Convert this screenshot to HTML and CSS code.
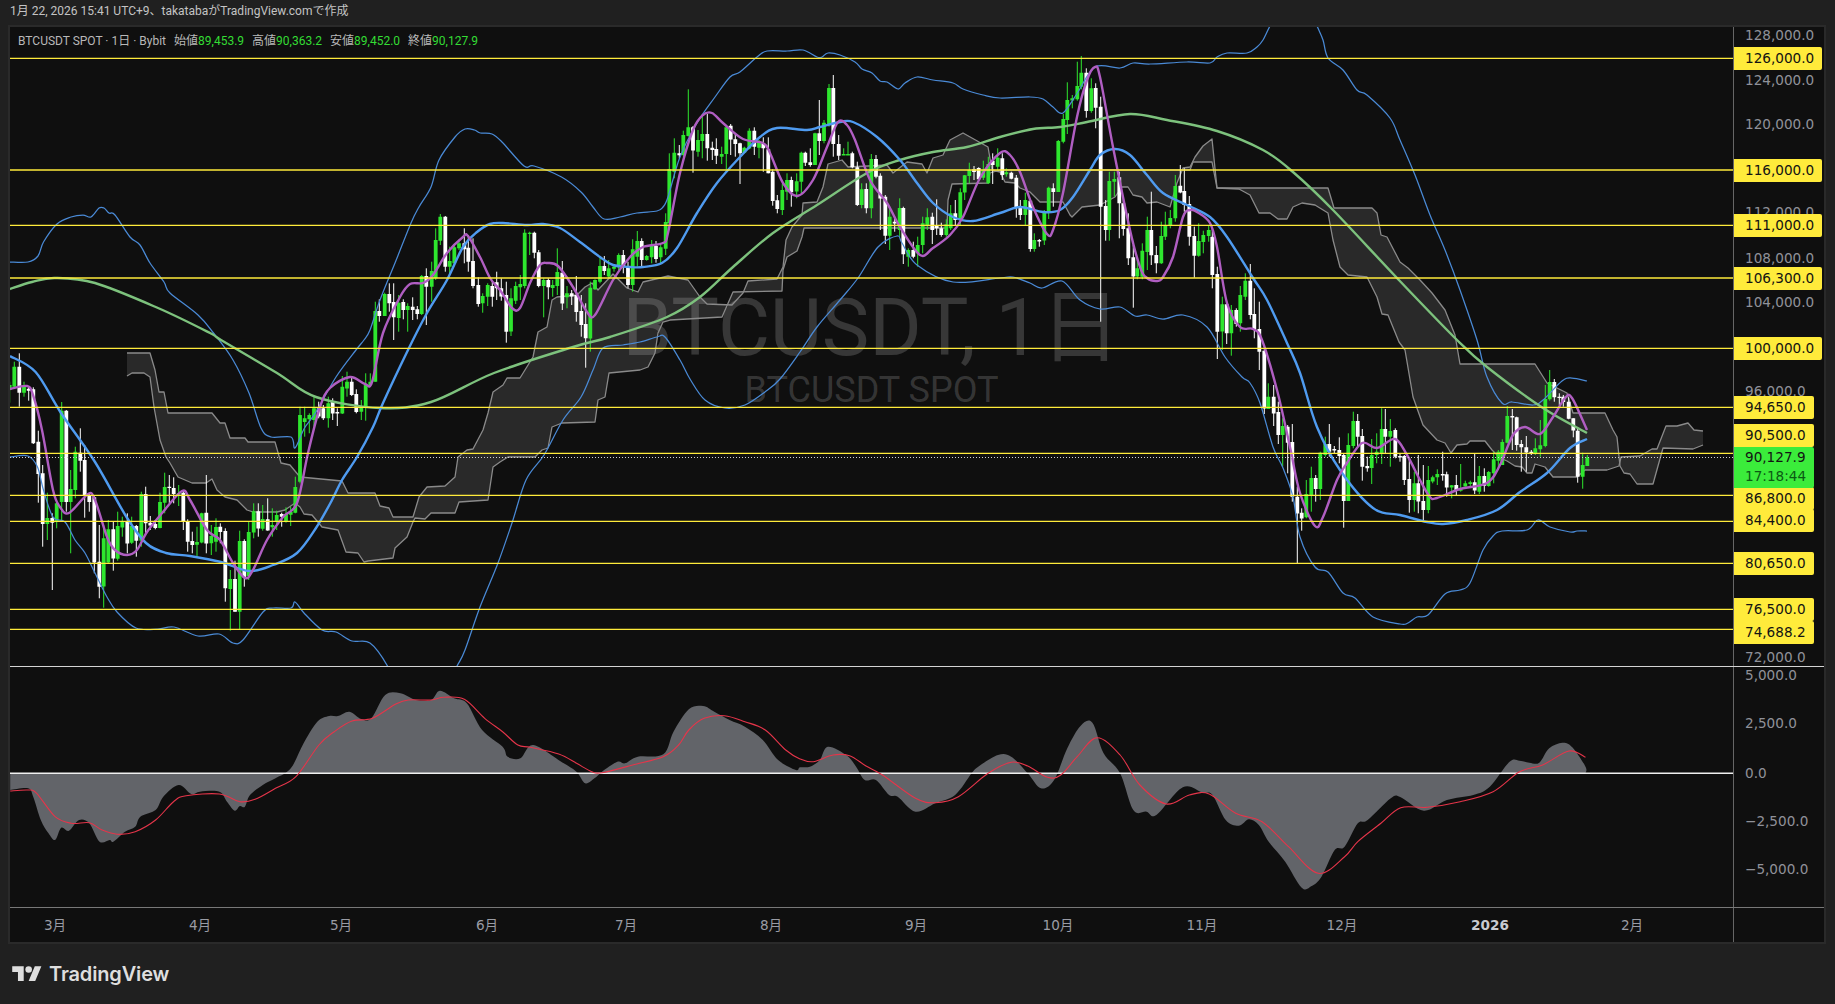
FILE: index.html
```html
<!DOCTYPE html>
<html lang="ja">
<head>
<meta charset="utf-8">
<title>BTCUSDT SPOT 1日 Bybit</title>
<link rel="stylesheet" href="styles.css">
</head>
<body>
<header class="stamp">1月 22, 2026 15:41 UTC+9、takatabaがTradingView.comで作成</header>
<main class="frame">
  <section class="row pane-main">
    <div class="plot">
      <div class="watermark">
        <div class="wm-title">BTCUSDT, 1日</div>
        <div class="wm-sub">BTCUSDT SPOT</div>
      </div>
      <svg id="main-chart" class="chart" viewBox="10 27 1723 639" preserveAspectRatio="none"></svg>
      <div class="legend">
        <span class="legend-title">BTCUSDT SPOT · 1日 · Bybit</span>
        <span class="ohlc">始値<b>89,453.9</b></span>
        <span class="ohlc">高値<b>90,363.2</b></span>
        <span class="ohlc">安値<b>89,452.0</b></span>
        <span class="ohlc">終値<b>90,127.9</b></span>
      </div>
    </div>
    <div class="axis" id="price-axis"></div>
  </section>
  <section class="row pane-macd">
    <div class="plot">
      <svg id="macd-chart" class="chart" viewBox="10 667 1723 240" preserveAspectRatio="none"></svg>
    </div>
    <div class="axis" id="macd-axis"></div>
  </section>
  <section class="row pane-time">
    <div class="plot" id="time-axis"></div>
    <div class="axis axis-corner"></div>
  </section>
</main>
<footer class="brand">
  <svg class="brand-mark" viewBox="0 0 36 28" aria-hidden="true">
    <path d="M14 22H7V11H0V4h14v18zM28 22h-8l7.5-18h8L28 22z"></path>
    <circle cx="20" cy="8" r="4"></circle>
  </svg>
  <span class="brand-name">TradingView</span>
</footer>
<script src="chart.js"></script>
</body>
</html>
```
FILE: styles.css
```css
* { box-sizing: border-box; }
html, body { margin: 0; height: 100%; }
body {
  width: 1835px;
  height: 1004px;
  overflow: hidden;
  background: #202020;
  color: #b8b8b8;
  font-family: Roboto, "Noto Sans CJK JP", sans-serif;
}
.stamp {
  height: 25px;
  padding: 3px 0 0 10px;
  font-size: 12px;
  line-height: 17px;
  color: #c4c4c4;
}
.frame {
  width: 1818px;
  margin-left: 8px;
  border: 2px solid #2a2a2a;
  background: #0f0f0f;
  display: flex;
  flex-direction: column;
}
.row { display: flex; }
.pane-main { height: 640px; border-bottom: 1px solid #d4d4d4; }
.pane-macd { height: 241px; border-bottom: 1px solid #787878; }
.pane-time { height: 34px; }
.plot {
  position: relative;
  width: 1723px;
  overflow: hidden;
}
.chart {
  position: absolute;
  inset: 0;
  width: 100%;
  height: 100%;
  display: block;
}
.axis {
  position: relative;
  width: 91px;
  border-left: 1px solid #666;
  overflow: hidden;
  font-family: "DejaVu Sans", "Noto Sans CJK JP", sans-serif;
  font-size: 13.6px;
}
.tick, .tag {
  position: absolute;
  left: 0;
  height: 23px;
  line-height: 23px;
  padding: 0 8px 0 11px;
  white-space: nowrap;
}
.tick { color: #8f9199; }
.tag {
  background: #ffeb3b;
  color: #131313;
  border-radius: 0 2px 2px 0;
}
.tag-live {
  height: 41px;
  line-height: 19px;
  padding-top: 1px;
  background: #3bec3b;
}
.tag-live span { display: block; color: #0b5a14; }
.legend {
  position: absolute;
  left: 8px;
  top: 6px;
  display: flex;
  gap: 8px;
  font-size: 12px;
  line-height: 17px;
  color: #b8b8b8;
  white-space: nowrap;
}
.ohlc b { font-weight: 400; color: #34dc34; }
.watermark {
  position: absolute;
  inset: 6px 0 0 0;
  display: flex;
  flex-direction: column;
  align-items: center;
  justify-content: center;
  gap: 3px;
  color: rgba(255, 255, 255, 0.17);
  white-space: nowrap;
}
.wm-title { font-size: 80px; line-height: 78px; }
.wm-sub { font-size: 36px; line-height: 40px; }
.time-label {
  position: absolute;
  top: 7px;
  transform: translateX(-50%);
  font-family: "DejaVu Sans", "Noto Sans CJK JP", sans-serif;
  font-size: 13.6px;
  line-height: 18px;
  color: #9a9ca4;
}
.time-label.year { font-weight: 700; color: #c8cad0; }
.brand {
  display: flex;
  align-items: center;
  gap: 7px;
  height: 60px;
  padding-left: 12px;
  color: #dedede;
}
.brand-mark { width: 30px; height: 23px; fill: currentColor; }
.brand-name { font-family: Inter, "Open Sans", sans-serif; font-size: 20px; font-weight: 600; letter-spacing: -0.15px; }
```
FILE: chart.js
```js
// Every row is "colour x high bodyTop bodyBottom low", measured in a crop that begins at (x0, y0) at 3x.
const candleBlocks = [
  [0, 340, `g 29 125 135 150 188;g 43 65 80 140 145;w 58 40 80 158 200;g 72 125 140 158 170;w 86 140 146 152 182;w 100 142 148 310 312;w 115 272 305 402 488;w 128 375 400 552 620;g 142 458 534 552 600;w 157 520 534 548 750;g 170 488 490 544 565;g 185 186 212 486 540;w 199 210 212 486 515;g 212 390 447 486 640;g 226 320 335 450 475;w 241 265 338 362 395;w 254 315 360 465 533;w 268 460 465 486 515;w 283 468 472 668 700;w 298 555 665 740 775;g 311 555 595 740 803;g 325 540 568 668 670;w 340 545 568 656 692;g 353 515 558 656 662;g 367 530 545 562 590;w 382 520 545 610 640;g 395 530 558 608 612;w 409 555 558 602 650;g 424 455 462 602 620;w 437 440 462 550 580;w 451 528 548 556 570;w 466 540 552 564 568;g 480 458 486 564 565;g 494 398 441 488 520;w 508 405 440 444 490;w 521 412 444 462 490;g 536 435 460 464 498;w 550 450 458 545 570;w 563 538 545 605 635;w 577 575 603 615 640;g 591 560 606 614 648;g 605 518 520 608 610;w 619 405 518 610 640;g 634 555 588 610 645;g 648 535 561 605 635;w 661 550 560 576 610;w 676 565 573 745 785;g 691 690 717 747 872;w 705 662 717 815 815;g 719 572 603 815 868;w 733 598 603 712 740;g 746 545 576 708 720;g 761 490 514 578 595;w 775 490 514 566 590;g 788 495 537 566 572;w 803 475 538 572 572;g 817 505 555 562 590;g 830 512 525 545 570;w 845 518 522 530 560;g 858 502 522 545 548;g 872 500 516 524 558;g 886 410 441 518 520;g 900 200 225 425 430`],
  [300, 200, `g 14 620 655 666 710;g 28 640 645 658 700;g 42 590 625 660 680;w 56 605 625 650 655;w 70 615 625 655 660;g 85 590 610 655 683;w 98 595 605 640 660;w 112 625 636 638 678;g 127 528 560 640 642;g 141 515 545 565 590;w 155 530 545 585 588;w 169 568 582 636 640;g 184 600 620 635 660;g 197 520 555 620 662;g 211 520 545 555 560;g 226 305 333 545 545;w 238 298 333 348 365;g 254 278 282 348 348;w 268 250 282 310 335;w 281 250 306 352 420;g 296 285 308 354 395;w 310 298 306 330 358;g 323 310 318 330 395;w 338 292 320 330 360;w 352 318 328 342 358;g 365 225 228 342 345;w 379 205 228 260 375;g 395 185 213 260 305;g 407 85 120 235 240;g 421 42 50 122 135;w 436 48 50 200 215;g 449 140 183 200 225;g 463 135 142 190 195;g 477 118 130 145 150;w 493 85 130 148 190;w 505 105 143 185 215;w 519 115 183 258 265;w 535 232 255 312 320;g 548 280 288 310 338;g 563 250 255 290 318;w 577 240 258 290 320;w 590 215 247 265 300;w 604 235 265 290 302;w 619 245 285 395 428;g 633 265 295 395 408;g 647 245 258 302 312;g 661 225 252 262 300;g 674 88 98 258 265;g 689 95 98 100 165;w 703 95 98 158 175;w 716 150 157 258 262;g 731 235 240 258 352;w 745 235 240 262 298;g 758 240 255 264 290;g 772 145 216 258 285;w 787 183 218 310 330;g 801 258 280 292 325;w 815 270 280 290 315;w 829 228 285 336 365;w 844 285 333 375 410;w 857 310 372 415 503;g 871 245 263 415 455;g 885 238 240 268 270;g 900 170 198 245 250;w 913 168 198 213 225;g 926 180 205 230 235`],
  [600, 40, `g 42 672 680 686 695;g 56 640 645 682 690;w 70 630 645 680 700;w 84 665 682 735 745;g 98 598 628 735 755;g 112 573 603 650 680;w 125 595 603 660 680;g 140 645 648 660 662;g 155 600 618 652 670;w 168 603 618 657 668;g 182 615 622 652 672;g 197 520 546 626 645;g 208 340 387 550 550;g 223 295 338 395 415;w 238 315 340 346 355;g 250 272 285 345 350;g 265 148 262 288 290;w 279 258 262 332 398;g 294 270 300 335 350;g 307 222 282 303 355;w 322 222 282 325 362;w 337 305 323 330 360;w 349 295 327 347 372;g 365 320 342 350 372;g 379 255 262 342 388;w 392 252 257 298 345;w 406 280 298 312 350;w 420 308 310 340 432;g 433 320 323 338 340;g 448 265 272 325 328;w 463 262 272 320 345;g 477 300 305 323 355;w 490 292 310 325 395;w 505 292 328 400 400;w 518 388 395 483 497;w 532 465 481 507 520;g 547 432 450 510 525;g 561 400 420 455 480;w 574 410 420 457 500;g 590 400 424 455 475;g 604 335 338 425 460;w 616 335 338 368 378;w 631 325 367 375 380;g 645 278 280 375 375;w 658 180 280 303 345;g 672 240 248 303 310;g 687 132 144 255 260;w 700 105 144 312 350;w 716 285 312 347 360;g 731 325 342 345 345;g 744 305 342 345 345;w 757 335 340 382 385;w 772 365 382 495 498;g 785 430 448 495 505;w 799 430 447 505 520;g 814 342 357 505 535;w 828 345 357 410 415;w 841 400 407 475 570;w 856 465 470 587 612;g 869 500 530 587 630;w 884 530 545 550 575;g 899 475 504 570 590;w 910 500 504 643 672;g 925 625 630 650 680;w 940 605 630 650 655;g 953 590 615 640 680;g 968 530 550 615 640;g 982 505 532 555 570;w 997 518 530 570 612;w 1010 478 556 565 585;w 1024 548 565 585 590;g 1039 538 553 585 590;g 1052 495 520 565 570;w 1066 480 520 540 555;g 1081 445 457 537 555;g 1094 405 406 458 480;g 1108 368 390 408 430;w 1122 378 388 396 420;w 1136 382 384 418 420;g 1150 362 390 413 420;g 1165 350 372 430 432;w 1178 340 362 375 432;g 1193 325 353 380 390`],
  [1000, 40, `w 7 340 355 405 420;g 19 385 397 403 410;w 34 395 398 416 418;w 49 405 413 503 533;w 61 480 500 525 540;g 76 458 480 525 555;w 91 480 482 627 635;g 103 580 600 627 635;w 118 597 600 602 620;g 133 510 514 602 615;g 146 440 443 517 537;w 160 430 445 456 500;g 175 300 303 456 456;g 190 222 237 305 310;g 202 127 180 240 282;g 217 165 175 182 205;g 232 65 138 178 182;g 244 48 98 140 148;w 259 85 98 213 233;g 274 115 145 213 218;w 287 130 144 203 265;w 302 170 200 500 845;w 317 480 498 570 602;g 328 395 423 570 602;g 343 395 417 425 470;w 358 395 412 490 595;w 370 470 490 567 587;w 385 520 565 655 675;w 400 615 652 710 803;g 412 655 685 710 718;g 427 610 632 710 718;g 442 530 570 636 690;w 454 455 570 646 675;w 469 618 645 670 700;g 484 545 588 670 672;g 496 515 558 590 600;g 511 510 534 556 565;g 526 405 438 535 545;w 541 375 437 457 460;w 553 385 453 495 515;w 568 468 492 590 617;w 583 560 588 647 713;g 596 550 603 647 650;g 610 572 585 606 640;g 626 555 570 588 605;w 637 565 590 705 745;w 652 680 702 875 957;g 667 770 793 875 930;w 680 785 793 880 912;g 694 795 810 880 947;w 709 805 810 852 860;g 721 738 765 850 875;g 736 700 722 770 780;w 751 672 722 825 838;w 763 745 822 870 895;w 778 785 867 935 990;w 793 925 932 1105 1122`],
  [1200, 340, `g 205 130 170 207 207;w 221 135 170 220 258;w 235 185 216 285 312;g 248 235 258 285 380;w 263 255 260 308 400;w 277 252 306 470 485;w 292 440 470 520 670;w 305 505 518 535 572;g 319 420 462 532 535;g 334 380 414 465 515;w 347 405 414 447 485;g 361 335 338 447 480;g 376 290 312 345 350;w 388 252 312 335 350;w 403 318 327 330 340;w 418 292 330 348 370;w 431 342 345 483 563;g 445 280 315 483 483;g 460 215 243 318 325;w 473 222 243 290 322;w 487 267 288 380 422;w 502 350 378 385 395;g 515 297 345 384 432;g 530 280 335 345 370;g 545 205 267 340 372;w 556 207 267 290 340;g 571 237 273 290 380;w 586 265 270 350 355;w 600 340 348 352 365;w 613 345 348 420 435;w 628 355 417 480 518;g 643 395 430 480 515;w 655 345 430 485 520;w 670 375 483 510 542;g 685 378 420 510 520;g 698 407 412 425 430;g 712 388 402 412 435;w 728 335 402 405 422;w 740 395 403 443 470;g 755 435 436 443 475;w 769 405 435 450 465;g 782 372 448 451 455;g 796 422 430 440 440;g 811 422 427 432 438;w 824 340 427 452 462;g 838 378 408 455 462;w 853 385 408 437 455;g 866 393 396 438 440;g 881 335 358 400 430;g 895 330 335 362 390;g 907 298 306 375 375;g 922 198 228 308 310;w 937 207 228 232 330;w 950 230 232 315 332;w 964 300 312 322 395;w 979 288 322 338 395;w 994 330 335 340 345;g 1006 295 325 340 345;g 1021 240 316 328 350;g 1036 135 177 318 322;g 1049 90 126 178 182;w 1063 117 126 172 185;w 1078 160 170 173 195;w 1090 165 170 186 200;w 1106 172 185 236 238;w 1120 235 235 272 292;w 1133 262 272 410 428;g 1148 338 375 410 446;g 1162 345 352 378 378`]
];

const bbUpper = [[10,262],[28,262],[38,256],[43.5,242],[57,224],[71,217],[83,215],[91,217],[99,208],[104,208],[109,213],[115,215],[130,237],[140,245],[150,263],[164,282],[170,293],[198,315],[213.5,333],[233,360],[249,393],[261,428],[271,437],[291,437],[295,448],[304.5,428],[316,412],[336,377],[356,350],[364,340],[370,330],[380,300],[395,263],[411,223],[419,207],[431,187],[439,160],[455,137],[465,129],[474.5,130],[480.4,133],[492,134],[502,142],[524,166],[534,166],[561.5,177],[581,192],[593,207],[604,219],[620,217],[637,213],[657,211],[663,207],[668,197],[680,157],[697,123],[715,97],[730,77],[740,72],[757,57],[767,51],[787,51],[803,50],[817,57],[822,57],[828,53],[840,55],[855,62],[862,69],[872,73],[880,81],[887,82],[898,89],[905,83],[917,77],[933,80],[953,83],[963,89],[983,95],[1000,98],[1030,97],[1043,99],[1053,107],[1063,113],[1078,92],[1095,67],[1120,68],[1133,63],[1150,64],[1187,62],[1210,63],[1217,57],[1227,53],[1247,53],[1257,47],[1263,40],[1270,26],[1280,10],[1310,10],[1317,26],[1323,40],[1328,58],[1343,70],[1357,90],[1367,95],[1390,118],[1400,140],[1415,175],[1430,215],[1445,250],[1460,290],[1477,340],[1487,377],[1502,403],[1512,402],[1533,405],[1543,400],[1562,381],[1572,378],[1587,381]];
const bbLower = [[10,457],[28,456],[37.5,467],[43.5,490],[53,517],[65,522],[75,540],[85,553],[95,573],[107,597],[117,612],[136,628],[158,629],[174,627],[198,636],[219,634],[233,643],[243,640],[263,612],[273,608],[291,608],[295,602],[304,613],[322,630],[336,632],[352,641],[370,643],[387.5,666],[400,695],[440,695],[457,666],[465,650],[480,607],[498,563],[512,523],[526,480],[544,455],[563,420],[581,397],[593,370],[603,348],[623,345],[640,342],[657,337],[665,337],[680,360],[690,379],[705,400],[725,408],[745,405],[765,392],[780,379],[800,352],[817,327],[840,300],[858,278],[878,247],[897,236],[902,243],[917,265],[953,282],[1000,278],[1013,277],[1030,283],[1042,288],[1062,281],[1080,300],[1100,309],[1120,307],[1135,316],[1147,315],[1163,319],[1183,315],[1207,327],[1225,357],[1242,377],[1250,383],[1260,403],[1273,447],[1283,468],[1293,497],[1300,537],[1315,567],[1328,572],[1343,593],[1355,598],[1373,617],[1400,624],[1408,623],[1417,617],[1428,615],[1445,594],[1460,590],[1470,583],[1483,550],[1493,536],[1502,531],[1527,530],[1538,520],[1550,527],[1570,532],[1577,531],[1587,531]];
const bbBasis = [[10,356],[35.6,372],[61,413],[95,462],[126.5,517],[146,543],[166,553],[190,556],[221,562],[249,571],[273,565],[297,553],[316,528],[332,500],[342,480],[357,457],[373,427],[383,403],[408,350],[427,313],[447,280],[463,247],[477,232],[490,224],[503,223],[527,225],[543,224],[560,228],[580,242],[600,257],[613,265],[630,267],[643,267],[662,263],[677,248],[697,213],[717,183],[740,157],[760,137],[777,128],[807,130],[820,127],[840,122],[853,122],[877,137],[900,160],[917,183],[933,203],[953,217],[973,221],[1000,213],[1020,207],[1043,212],[1060,210],[1073,197],[1090,170],[1100,155],[1115,149],[1130,155],[1147,175],[1163,193],[1187,205],[1210,217],[1227,237],[1253,278],[1267,300],[1287,343],[1300,373],[1317,427],[1340,470],[1373,508],[1400,515],[1427,522],[1443,524],[1467,520],[1497,510],[1520,492],[1547,473],[1570,448],[1587,439]];
const maShort = [[10,389],[27,386],[33,395],[42,430],[53,490],[60,507],[69,513],[88,494],[95,500],[107,537],[115,550],[127,555],[137,550],[147,532],[163,512],[182,491],[190,500],[207,530],[220,540],[233,563],[245,578],[253,570],[267,540],[283,517],[297,503],[308,453],[320,407],[330,388],[350,377],[365,384],[372,382],[383,333],[400,297],[410,284],[423,283],[433,275],[447,253],[463,237],[468,236],[480,257],[490,278],[500,290],[512,308],[520,308],[530,283],[540,265],[547,263],[558,266],[573,287],[587,312],[595,315],[613,280],[630,257],[643,247],[663,243],[668,233],[680,173],[693,130],[703,115],[712,113],[723,123],[743,139],[763,143],[770,153],[783,183],[797,196],[813,180],[827,147],[838,122],[847,125],[855,140],[870,180],[887,203],[900,227],[920,255],[933,248],[950,235],[963,217],[980,178],[1000,153],[1010,155],[1020,172],[1033,207],[1047,234],[1053,230],[1063,193],[1077,117],[1087,80],[1095,67],[1100,77],[1113,147],[1130,230],[1140,267],[1147,278],[1157,281],[1163,277],[1173,257],[1183,217],[1190,210],[1197,212],[1210,223],[1217,247],[1227,303],[1240,327],[1253,329],[1262,340],[1277,390],[1290,447],[1300,493],[1315,526],[1323,517],[1337,480],[1347,463],[1362,443],[1377,448],[1395,439],[1407,455],[1420,480],[1430,497],[1437,498],[1460,489],[1487,483],[1500,465],[1513,435],[1525,427],[1540,434],[1553,417],[1565,398],[1572,398],[1587,430]];
const maLong = [[10,289],[32,282],[55,278],[95,283],[158,308],[210,333],[221,340],[277,373],[316,397],[380,408],[431,402],[494,373],[573,347],[610,337],[667,317],[700,297],[733,267],[773,233],[817,205],[867,173],[900,160],[933,152],[967,147],[1000,137],[1033,129],[1060,127],[1087,122],[1130,114],[1167,120],[1217,131],[1263,150],[1293,172],[1333,210],[1397,278],[1457,340],[1487,367],[1543,408],[1587,433]];
const cloudA = [[127,353],[150,353],[155,370],[159,392],[164,392],[168,413],[212,413],[220,423],[225,423],[230,438],[245,438],[248,442],[275,442],[281,463],[290,465],[300,477],[342,481],[348,493],[375,493],[380,506],[389,508],[393,517],[413,517],[419,497],[427,487],[445,486],[455,477],[458,457],[467,450],[473,449],[483,430],[488,413],[493,392],[503,385],[507,378],[520,378],[533,357],[538,332],[547,327],[552,300],[557,297],[577,295],[585,287],[592,283],[598,290],[613,274],[627,288],[638,292],[643,282],[660,278],[668,276],[678,278],[688,280],[700,297],[707,304],[732,305],[743,293],[748,281],[777,279],[783,267],[786,240],[792,227],[802,215],[803,203],[817,202],[823,187],[828,164],[842,160],[848,167],[887,165],[893,173],[907,162],[922,164],[927,173],[933,158],[943,155],[950,140],[963,133],[988,147],[992,170],[1000,172],[1005,182],[1015,183],[1020,188],[1030,192],[1040,202],[1063,202],[1070,215],[1072,217],[1082,207],[1100,205],[1115,197],[1122,187],[1128,187],[1133,195],[1142,197],[1147,203],[1157,202],[1170,207],[1177,183],[1183,168],[1190,167],[1195,157],[1203,146],[1212,139],[1217,188],[1239,189],[1250,195],[1259,213],[1270,213],[1278,219],[1287,219],[1293,207],[1302,203],[1315,205],[1328,213],[1333,240],[1340,267],[1348,275],[1367,277],[1377,297],[1382,314],[1388,315],[1399,342],[1405,350],[1413,397],[1423,425],[1437,440],[1445,443],[1451,453],[1457,445],[1467,444],[1470,441],[1485,441],[1492,450],[1500,458],[1507,461],[1515,466],[1522,467],[1527,473],[1532,473],[1535,464],[1545,467],[1553,477],[1577,477],[1585,470],[1607,470],[1619,466],[1621,457],[1640,456],[1652,449],[1657,449],[1666,426],[1677,426],[1688,423],[1694,430],[1703,431]];
const cloudB = [[127,376],[132,373],[144,373],[150,377],[154,407],[160,440],[166,457],[170,463],[178,477],[192,483],[206,483],[212,479],[217,490],[225,497],[237,500],[247,510],[253,512],[277,512],[285,510],[295,503],[300,507],[304,514],[312,515],[322,527],[338,530],[346,552],[358,553],[364,562],[368,561],[393,558],[395,548],[407,537],[413,522],[415,518],[425,519],[431,513],[455,513],[459,502],[488,500],[493,467],[500,462],[508,457],[535,457],[542,450],[548,448],[552,427],[562,423],[595,422],[598,400],[605,397],[609,373],[640,370],[648,367],[655,353],[658,333],[663,322],[670,320],[722,317],[733,292],[782,291],[783,270],[787,257],[797,251],[802,237],[804,228],[947,228],[948,200],[952,184],[988,183],[990,173],[1000,170],[1190,170],[1193,162],[1212,162],[1217,188],[1328,188],[1334,208],[1372,208],[1377,213],[1381,235],[1387,237],[1400,262],[1408,268],[1420,280],[1432,293],[1445,310],[1455,335],[1460,364],[1535,364],[1547,383],[1567,393],[1573,413],[1605,413],[1613,430],[1617,437],[1620,466],[1624,473],[1630,474],[1637,484],[1653,484],[1663,448],[1693,449],[1703,445]];

// MACD crops are squeezed horizontally: x = x0 + zx * k, y = 660 + zy / 3.
const left = 800 / 1568, right = 1035 / 1568;
const macdL = (a) => a.map(([x, y]) => [+(x * left).toFixed(1), +(660 + y / 3).toFixed(1)]);
const macdR = (a) => a.map(([x, y]) => [+(800 + x * right).toFixed(1), +(660 + y / 3).toFixed(1)]);
const histogram = macdL([[20,390],[55,385],[65,410],[80,480],[95,520],[108,540],[120,503],[135,512],[155,480],[175,490],[195,545],[215,540],[222,545],[245,515],[265,500],[275,470],[305,450],[320,410],[350,375],[375,402],[392,395],[430,395],[445,425],[460,452],[470,438],[480,440],[490,405],[515,375],[540,355],[570,325],[595,250],[622,185],[645,168],[662,168],[685,155],[708,177],[728,175],[755,105],[785,100],[815,120],[845,120],[862,92],[890,115],[915,130],[945,210],[985,260],[995,290],[1020,295],[1045,255],[1100,305],[1130,335],[1147,370],[1165,355],[1180,335],[1210,305],[1225,310],[1250,290],[1300,283],[1320,215],[1350,148],[1378,138],[1400,155],[1430,180],[1460,200],[1495,240],[1525,300],[1560,330]]).concat(
  macdR([[0,322],[15,320],[30,300],[42,260],[70,285],[85,320],[98,360],[115,360],[135,405],[148,410],[175,455],[205,430],[235,405],[260,340],[270,320],[300,285],[320,290],[345,340],[365,385],[385,360],[405,265],[425,198],[443,188],[460,280],[485,340],[505,450],[525,455],[540,465],[580,382],[610,398],[625,405],[645,480],[665,497],[680,478],[695,495],[710,545],[735,605],[760,683],[775,678],[790,650],[810,570],[825,560],[845,490],[860,480],[895,415],[910,412],[945,452],[980,420],[1020,405],[1045,380],[1075,305],[1090,302],[1105,308],[1120,308],[1135,265],[1155,248],[1170,262],[1190,320],[1190,340]]));
const signal = macdL([[20,393],[55,390],[72,400],[108,470],[140,490],[175,488],[200,510],[230,523],[265,515],[305,480],[340,425],[365,407],[430,402],[470,425],[500,418],[540,385],[580,350],[625,255],[655,215],[690,183],[730,175],[775,133],[800,120],[845,120],[870,112],[910,118],[950,175],[985,215],[1015,255],[1040,262],[1095,282],[1130,310],[1160,335],[1180,338],[1240,315],[1300,290],[1330,255],[1350,210],[1380,175],[1420,167],[1460,185],[1500,210],[1540,270]]).concat(
  macdR([[0,297],[20,305],[50,285],[75,287],[100,318],[125,345],[175,415],[205,428],[240,410],[285,340],[320,307],[345,318],[375,352],[395,345],[420,290],[450,233],[485,285],[515,375],[555,432],[590,405],[620,402],[660,460],[700,485],[740,560],[785,640],[825,590],[845,545],[880,490],[910,443],[950,442],[1000,425],[1050,395],[1090,335],[1125,315],[1165,273],[1190,292]]));

const levels = [58.3, 170, 225.3, 278, 348.3, 407.3, 453.3, 495.3, 521.3, 563.3, 609.3, 629.3];
const priceTicks = [["128,000.0",35],["124,000.0",80],["120,000.0",124],["112,000.0",212],["108,000.0",258],["104,000.0",302],["96,000.0",391],["72,000.0",657]];
const priceTags = [["126,000.0",47],["116,000.0",159],["111,000.0",214],["106,300.0",267],["100,000.0",337],["94,650.0",396],["90,500.0",424],["86,800.0",487],["84,400.0",509],["80,650.0",552],["76,500.0",598],["74,688.2",621]];
const macdTicks = [["5,000.0",8],["2,500.0",56],["0.0",106],["−2,500.0",154],["−5,000.0",202]];
const months = [["3月",55],["4月",200],["5月",341],["6月",487],["7月",626],["8月",771],["9月",916],["10月",1058],["11月",1202],["12月",1342],["2026",1490,true],["2月",1632]];

const NS = "http://www.w3.org/2000/svg";
function svgEl(parent, name, attrs) {
  const el = document.createElementNS(NS, name);
  for (const key in attrs) el.setAttribute(key, attrs[key]);
  parent.appendChild(el);
  return el;
}
const straight = (pts) => "M" + pts.map((p) => p.join(" ")).join("L");
function smooth(pts) {
  let d = "M" + pts[0].join(" ");
  for (let i = 0; i < pts.length - 1; i++) {
    const p0 = pts[i - 1] || pts[i], p1 = pts[i], p2 = pts[i + 1], p3 = pts[i + 2] || p2;
    const c1 = [p1[0] + (p2[0] - p0[0]) / 6, p1[1] + (p2[1] - p0[1]) / 6];
    const c2 = [p2[0] - (p3[0] - p1[0]) / 6, p2[1] - (p3[1] - p1[1]) / 6];
    d += `C${c1[0].toFixed(1)} ${c1[1].toFixed(1)} ${c2[0].toFixed(1)} ${c2[1].toFixed(1)} ${p2[0]} ${p2[1]}`;
  }
  return d;
}
function stroke(svg, d, color, width) {
  svgEl(svg, "path", { d, fill: "none", stroke: color, "stroke-width": width, "stroke-linejoin": "round" });
}

function drawMain(svg) {
  const poly = cloudA.concat(cloudB.slice().reverse());
  svgEl(svg, "path", { d: straight(poly) + "Z", fill: "rgba(255,255,255,0.11)", "fill-rule": "nonzero" });
  stroke(svg, straight(cloudA), "#8a8a8a", 1.3);
  stroke(svg, straight(cloudB), "#8a8a8a", 1.3);

  const wicks = { g: "", w: "" }, bodies = { g: "", w: "" };
  for (const [x0, y0, rows] of candleBlocks) {
    for (const row of rows.split(";")) {
      const [c, zx, h, t, b, l] = row.split(" ");
      const x = x0 + zx / 3;
      const y = (z) => (y0 + z / 3).toFixed(1);
      const bodyH = Math.max(1.4, (b - t) / 3);
      wicks[c] += `M${x.toFixed(1)} ${y(h)}V${y(l)}`;
      bodies[c] += `M${(x - 1.9).toFixed(1)} ${y(t)}h3.8v${bodyH.toFixed(1)}h-3.8z`;
    }
  }
  for (const c of ["g", "w"]) {
    const color = c === "g" ? "#2ee62e" : "#ffffff";
    stroke(svg, wicks[c], color, 1);
    svgEl(svg, "path", { d: bodies[c], fill: color });
  }

  stroke(svg, smooth(bbUpper), "#4a8ad6", 1.25);
  stroke(svg, smooth(bbLower), "#4a8ad6", 1.25);
  stroke(svg, smooth(maLong), "#7dc27d", 2.4);
  stroke(svg, smooth(bbBasis), "#4f9bf0", 2.4);
  stroke(svg, smooth(maShort), "#b05ec2", 2.4);

  for (const y of levels) stroke(svg, `M10 ${y}H1733`, "#ffeb3b", 1.3);
  svgEl(svg, "path", { d: "M10 457.5H1733", stroke: "#d0d0d0", "stroke-width": 1, "stroke-dasharray": "1 2", fill: "none" });
}

function drawMacd(svg) {
  const first = histogram[0], last = histogram[histogram.length - 1];
  svgEl(svg, "path", { d: smooth(histogram) + `L${last[0]} 773L${first[0]} 773Z`, fill: "#626469" });
  svgEl(svg, "path", { d: "M10 773.3H1733", stroke: "#f0f0f0", "stroke-width": 1.4, fill: "none" });
  stroke(svg, smooth(signal), "#e5354a", 1.1);
}

function label(parent, cls, text, top) {
  const el = document.createElement("div");
  el.className = cls;
  el.textContent = text;
  el.style.top = top + "px";
  parent.appendChild(el);
  return el;
}

drawMain(document.getElementById("main-chart"));
drawMacd(document.getElementById("macd-chart"));

const priceAxis = document.getElementById("price-axis");
for (const [text, center] of priceTicks) label(priceAxis, "tick", text, center - 27 - 11.5);
for (const [text, top] of priceTags) label(priceAxis, "tag", text, top - 27);
const live = label(priceAxis, "tag tag-live", "90,127.9", 447 - 27);
const countdown = document.createElement("span");
countdown.textContent = "17:18:44";
live.appendChild(countdown);

const macdAxis = document.getElementById("macd-axis");
for (const [text, top] of macdTicks) label(macdAxis, "tick", text, top - 11.5);

const timeAxis = document.getElementById("time-axis");
for (const [text, x, year] of months) {
  const el = label(timeAxis, year ? "time-label year" : "time-label", text, 8);
  el.style.left = x - 10 + "px";
}
```
